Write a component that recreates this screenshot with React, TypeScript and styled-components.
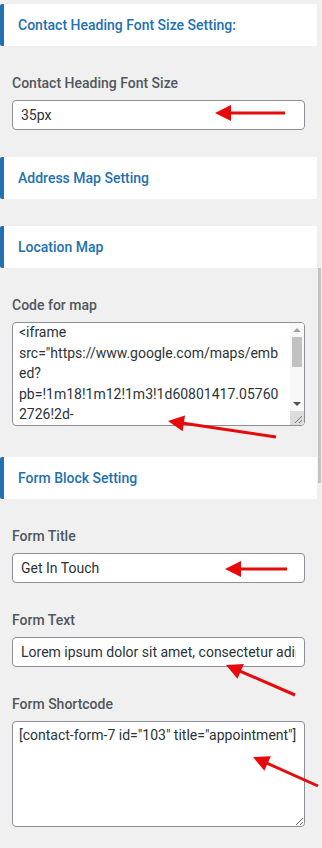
import React, { useLayoutEffect, useRef } from "react";
import styled, { createGlobalStyle } from "styled-components";

const Global = createGlobalStyle`
  html, body { margin: 0; padding: 0; background: #f0f0f1; }
  body { font-family: Roboto, "Noto Sans", Arial, sans-serif; }
  * { box-sizing: border-box; }
`;

const Page = styled.div`
  position: relative;
  width: 322px;
  height: 848px;
  overflow: hidden;
  display: flex;
  align-items: flex-start;
  background: #f0f0f1;
`;

const Panel = styled.div`
  width: 317px;
  flex-shrink: 0;
  padding-top: 4px;
`;

const ScrollTrack = styled.div`
  width: 5px;
  flex-shrink: 0;
  padding: 268px 1px 0 1px;
`;

const ScrollThumb = styled.div`
  height: 215px;
  width: 3px;
  background: #c3c3c4;
`;

const SectionHeader = styled.h3`
  margin: 0 0 27px 0;
  height: 42px;
  display: flex;
  align-items: center;
  padding-left: 14px;
  background: #fff;
  border-left: 4px solid #2271b1;
  border-radius: 2px 0 0 2px;
  color: #2271b1;
  font-family: Roboto, Arial, sans-serif;
  font-size: 14px;
  font-weight: 500;
`;

const Control = styled.div<{ $gap?: number }>`
  padding: 0 12px;
  margin-bottom: ${(p) => p.$gap ?? 27}px;
`;

const Label = styled.label`
  display: block;
  height: 20px;
  line-height: 20px;
  margin-bottom: 7px;
  color: #50575e;
  font-size: 14px;
  font-weight: 500;
`;

const TextInput = styled.input`
  display: block;
  width: 100%;
  height: 30px;
  margin: 0;
  padding: 0 8px;
  border: 1px solid #8c8f94;
  border-radius: 4px;
  background: #fff;
  color: #2c3338;
  font-family: Roboto, Arial, sans-serif;
  font-size: 14px;
  outline: none;
`;

const TextArea = styled.textarea<{ $h: number }>`
  display: block;
  width: 100%;
  height: ${(p) => p.$h}px;
  margin: 0;
  padding: 3px 6px;
  border: 1px solid #8c8f94;
  border-radius: 4px;
  background: #fff;
  color: #2c3338;
  font-family: Roboto, Arial, sans-serif;
  font-size: 14px;
  line-height: 20.5px;
  resize: vertical;
  outline: none;
`;

const CodeField = styled.div`
  position: relative;
`;

const CodeArea = styled(TextArea)`
  padding-right: 20px;
  overflow: hidden;
  resize: none;
`;

/* the textarea's own scrollbar, drawn over its right edge */
const InnerScrollbar = styled.div`
  position: absolute;
  top: 1px;
  right: 1px;
  bottom: 1px;
  width: 14px;
  display: flex;
  flex-direction: column;
  background: #f8f8f8;
  border-radius: 0 3px 3px 0;
  overflow: hidden;
`;

const ScrollButton = styled.div`
  height: 14px;
  flex-shrink: 0;
  display: flex;
  align-items: center;
  justify-content: center;
`;

const Triangle = styled.div<{ $up?: boolean }>`
  width: 0;
  height: 0;
  border-left: 4px solid transparent;
  border-right: 4px solid transparent;
  ${(p) =>
    p.$up ? "border-bottom: 4px solid #a3a3a3;" : "border-top: 4px solid #505050;"}
`;

const InnerTrack = styled.div`
  flex: 1;
  padding: 0 2px;
`;

const InnerThumb = styled.div`
  height: 30px;
  background: #c1c1c1;
`;

const Corner = styled.div`
  height: 14px;
  flex-shrink: 0;
  background: #dcdcdc;
  display: flex;
  align-items: flex-end;
  justify-content: flex-end;
`;

const Overlay = styled.svg`
  position: absolute;
  left: 0;
  top: 0;
  pointer-events: none;
`;

type Pt = [number, number];

function Arrow({ tip, tail }: { tip: Pt; tail: Pt }) {
  const dx = tail[0] - tip[0];
  const dy = tail[1] - tip[1];
  const len = Math.hypot(dx, dy);
  const ux = dx / len;
  const uy = dy / len;
  const L = 16;
  const W = 8;
  const bx = tip[0] + ux * L;
  const by = tip[1] + uy * L;
  const nx = -uy;
  const ny = ux;
  const pts = `${tip[0]},${tip[1]} ${bx + nx * W},${by + ny * W} ${bx - nx * W},${by - ny * W}`;
  return (
    <g>
      <line x1={bx - ux * 2} y1={by - uy * 2} x2={tail[0]} y2={tail[1]} stroke="#e60a0a" strokeWidth={3} />
      <polygon points={pts} fill="#e60a0a" />
    </g>
  );
}

const mapCode =
  '<iframe src="https://www.google.com/maps/embed?pb=!1m18!1m12!1m3!1d60801417.057602726!2d-73.98784492426285!3d40.74844097932681!2m3!1f0!2f0!3f0!3m2!1i1024!2i768!4f13.1!3m3!1m2!1s0x89c259a9b3117469%3A0xd134e199a405a163!2sEmpire%20State%20Building!5e0!3m2!1sen!2sus!4v1" width="600" height="450" style="border:0;" allowfullscreen="" loading="lazy"></iframe>';

export default function App() {
  const codeRef = useRef<HTMLTextAreaElement>(null);
  useLayoutEffect(() => {
    if (codeRef.current) codeRef.current.scrollTop = 4;
  }, []);
  return (
    <>
      <Global />
      <Page>
        <Panel>
          <SectionHeader>Contact Heading Font Size Setting:</SectionHeader>
          <Control>
            <Label>Contact Heading Font Size</Label>
            <TextInput defaultValue="35px" />
          </Control>
          <SectionHeader>Address Map Setting</SectionHeader>
          <SectionHeader>Location Map</SectionHeader>
          <Control $gap={31}>
            <Label>Code for map</Label>
            <CodeField>
              <CodeArea ref={codeRef} $h={104} defaultValue={mapCode} />
              <InnerScrollbar>
                <ScrollButton>
                  <Triangle $up />
                </ScrollButton>
                <InnerTrack>
                  <InnerThumb />
                </InnerTrack>
                <ScrollButton>
                  <Triangle />
                </ScrollButton>
                <Corner>
                  <svg width="14" height="14" viewBox="0 0 14 14">
                    <path d="M12 5 L5 12 M12 9 L9 12" stroke="#7a7a7a" strokeWidth="1" />
                  </svg>
                </Corner>
              </InnerScrollbar>
            </CodeField>
          </Control>
          <SectionHeader>Form Block Setting</SectionHeader>
          <Control>
            <Label>Form Title</Label>
            <TextInput defaultValue="Get In Touch" />
          </Control>
          <Control>
            <Label>Form Text</Label>
            <TextInput defaultValue="Lorem ipsum dolor sit amet, consectetur adipiscing elit, sed do eiusmod tempor." />
          </Control>
          <Control>
            <Label>Form Shortcode</Label>
            <TextArea $h={106} defaultValue={'[contact-form-7 id="103" title="appointment"]'} />
          </Control>
        </Panel>
        <ScrollTrack>
          <ScrollThumb />
        </ScrollTrack>
        <Overlay width={322} height={848} viewBox="0 0 322 848">
          <Arrow tip={[215, 113]} tail={[285, 113]} />
          <Arrow tip={[168, 421]} tail={[276, 437]} />
          <Arrow tip={[225, 569]} tail={[287, 569]} />
          <Arrow tip={[226, 665]} tail={[295, 695]} />
          <Arrow tip={[253, 757]} tail={[318, 786]} />
        </Overlay>
      </Page>
    </>
  );
}
